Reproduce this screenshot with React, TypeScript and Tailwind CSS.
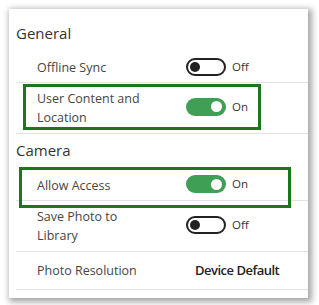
import React from "react";

const font = { fontFamily: '"Open Sans", "Noto Sans", sans-serif' };

function Toggle({ on }: { on: boolean }) {
  return (
    <div className="flex items-center gap-[6px]">
      {on ? (
        <div className="w-[40px] h-[18px] rounded-full bg-[#3f9f55] flex items-center justify-end pr-[4px]">
          <div className="w-[11px] h-[11px] rounded-full bg-white" />
        </div>
      ) : (
        <div className="w-[40px] h-[18px] rounded-full border-2 border-[#222] flex items-center pl-[2px]">
          <div className="w-[10px] h-[10px] rounded-full bg-[#222]" />
        </div>
      )}
      <span className="text-[11.5px] text-[#333] leading-none">{on ? "On" : "Off"}</span>
    </div>
  );
}

function Row({
  label,
  children,
  h,
  box,
}: {
  label: React.ReactNode;
  children: React.ReactNode;
  h: string;
  box?: React.ReactNode;
}) {
  return (
    <div className={`relative ml-[7px] flex items-center border-b border-[#e2e2e2] ${h}`}>
      <div className="w-[170px] pl-[21px] text-[12.5px] leading-[19px] text-[#454545]">{label}</div>
      {children}
      {box}
    </div>
  );
}

export default function App() {
  return (
    <div className="w-[319px] h-[305px] bg-white" style={font}>
      <div className="relative ml-[9px] pt-[9px]">
        <div className="w-[299px] h-[289px] bg-white shadow-[2px_2px_6px_2px_rgba(0,0,0,0.35)]">
          <div className="h-[43px] pt-[14px] pl-[7px] text-[15px] leading-[20px] text-[#333]">General</div>
          <Row label="Offline Sync" h="h-[31px]">
            <div className="-mt-[1px]"><Toggle on={false} /></div>
          </Row>
          <Row
            label={
              <>
                User Content and
                <br />
                Location
              </>
            }
            h="h-[51px]"
            box={
              <div className="absolute left-[7px] top-[1px] w-[238px] h-[46px] border-[3px] border-[#1c761c] pointer-events-none" />
            }
          >
            <div className="-mt-[3px]"><Toggle on={true} /></div>
          </Row>
          <div className="h-[36px] pt-[6px] pl-[7px] text-[15px] leading-[20px] text-[#333]">Camera</div>
          <Row
            label="Allow Access"
            h="h-[31px]"
            box={
              <div className="absolute left-[3px] -top-[3px] w-[272px] h-[41px] border-[3px] border-[#1c761c] z-10 pointer-events-none" />
            }
          >
            <div className="-mt-[2px]"><Toggle on={true} /></div>
          </Row>
          <Row
            label={
              <>
                Save Photo to
                <br />
                Library
              </>
            }
            h="h-[51px]"
          >
            <div className="-mt-[3px]"><Toggle on={false} /></div>
          </Row>
          <Row label="Photo Resolution" h="h-[38px]">
            <div className="ml-[9px] text-[13px] font-semibold text-[#222] tracking-[-0.5px]">Device Default</div>
          </Row>
        </div>
      </div>
    </div>
  );
}
